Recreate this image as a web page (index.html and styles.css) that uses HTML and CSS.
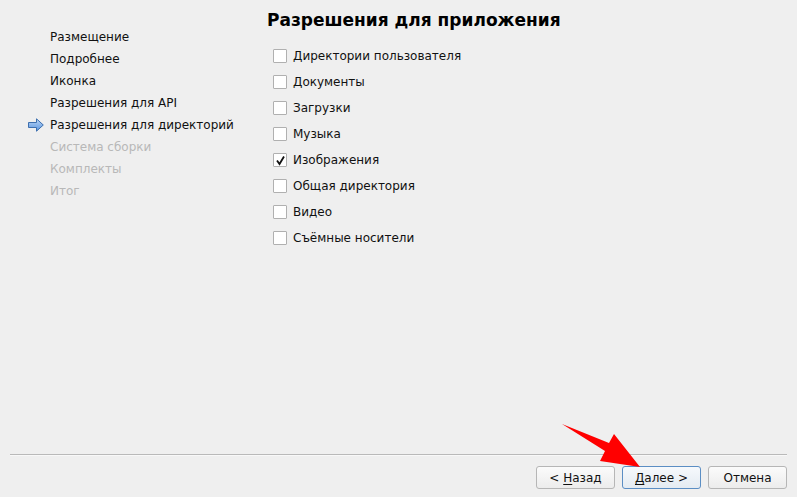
FILE: index.html
```html
<!DOCTYPE html>
<html lang="ru">
<head>
<meta charset="utf-8">
<link rel="stylesheet" href="styles.css">
</head>
<body>
<div class="wizard">
  <div class="main">
    <ul class="steps">
      <li class="step"><span class="slot"></span>Размещение</li>
      <li class="step"><span class="slot"></span>Подробнее</li>
      <li class="step"><span class="slot"></span>Иконка</li>
      <li class="step"><span class="slot"></span>Разрешения для API</li>
      <li class="step current"><span class="slot"><svg width="16" height="14" viewBox="0 0 16 14"><defs><linearGradient id="g" x1="0" y1="0" x2="0" y2="1"><stop offset="0" stop-color="#bcd6f5"/><stop offset="1" stop-color="#5a95df"/></linearGradient></defs><path d="M0.5 4.5 H8.5 V0.8 L15.3 7 L8.5 13.2 V9.5 H0.5 Z" fill="url(#g)" stroke="#3d6fae" stroke-width="1" stroke-linejoin="round"/></svg></span>Разрешения для директорий</li>
      <li class="step disabled"><span class="slot"></span>Система сборки</li>
      <li class="step disabled"><span class="slot"></span>Комплекты</li>
      <li class="step disabled"><span class="slot"></span>Итог</li>
    </ul>
    <div class="page">
      <h1 class="title">Разрешения для приложения</h1>
      <ul class="checks">
        <li class="check"><span class="box"></span>Директории пользователя</li>
        <li class="check"><span class="box"></span>Документы</li>
        <li class="check"><span class="box"></span>Загрузки</li>
        <li class="check"><span class="box"></span>Музыка</li>
        <li class="check"><span class="box"><svg width="11" height="11" viewBox="0 0 11 11"><path d="M2 5.5 L4.5 9 L9 1.5" fill="none" stroke="#111" stroke-width="1.8"/></svg></span>Изображения</li>
        <li class="check"><span class="box"></span>Общая директория</li>
        <li class="check"><span class="box"></span>Видео</li>
        <li class="check"><span class="box"></span>Съёмные носители</li>
      </ul>
    </div>
  </div>
  <div class="footer">
    <div class="sep"></div>
    <div class="buttons">
      <button class="btn">&lt; <u>Н</u>азад</button>
      <button class="btn default"><u>Д</u>алее &gt;</button>
      <button class="btn">Отмена</button>
    </div>
  </div>
  <svg class="pointer" width="797" height="497" viewBox="0 0 797 497"><polygon points="562,424 609,443 614,434 640,467 600,461 605,451" fill="#ff0000"/></svg>
</div>
</body>
</html>
```
FILE: styles.css
```css
html, body {
  margin: 0;
  padding: 0;
  background: #efefef;
}
body {
  font-family: "DejaVu Sans", "Liberation Sans", sans-serif;
  font-size: 12px;
  color: #111;
}
.wizard {
  position: relative;
  width: 797px;
  height: 497px;
  display: flex;
  flex-direction: column;
}
.main {
  flex: 1;
  display: flex;
}
.steps {
  list-style: none;
  margin: 0;
  padding: 26px 0 0 28px;
  width: 239px;
}
.step {
  display: flex;
  align-items: center;
  height: 22px;
}
.slot {
  width: 16px;
  height: 14px;
  margin-right: 6px;
  display: flex;
}
.step.disabled {
  color: #b8b8b8;
}
.title {
  margin: 9px 0 0 0;
  font-size: 17px;
  font-weight: bold;
  line-height: 22px;
  color: #000;
}
.checks {
  list-style: none;
  margin: 12px 0 0 0;
  padding: 0 0 0 6px;
}
.check {
  display: flex;
  align-items: center;
  height: 26px;
}
.box {
  width: 12px;
  height: 12px;
  border: 1px solid #b0b0b0;
  background: #fff;
  margin-right: 6px;
  border-radius: 1px;
  display: flex;
  align-items: center;
  justify-content: center;
}
.footer {
  padding: 0 10px 8px 10px;
}
.sep {
  height: 1px;
  background: #b9b9b9;
  border-bottom: 1px solid #f8f8f8;
  margin-bottom: 10px;
}
.buttons {
  display: flex;
  justify-content: flex-end;
  gap: 7px;
}
.btn {
  width: 79px;
  height: 23px;
  font-family: inherit;
  font-size: 12px;
  color: #111;
  border: 1px solid #b6b6b6;
  border-radius: 3px;
  background: linear-gradient(#fbfbfb, #ececec);
  padding: 0;
}
.btn u {
  text-decoration-thickness: 1px;
  text-underline-offset: 2px;
}
.btn.default {
  border-color: #5b8ec4;
  background: linear-gradient(#f6f9fc, #e4ebf2);
}
.pointer {
  position: absolute;
  left: 0;
  top: 0;
  pointer-events: none;
}
```
